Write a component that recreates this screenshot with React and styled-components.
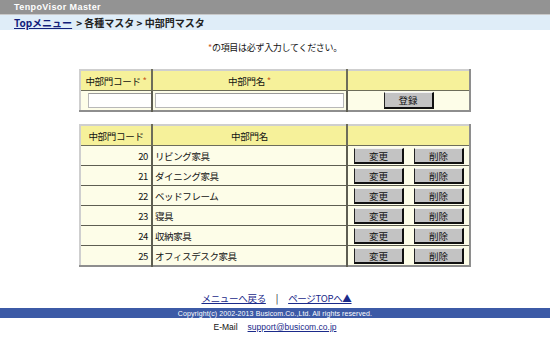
import React from "react";
import styled, { createGlobalStyle } from "styled-components";

const GlobalStyle = createGlobalStyle`
  html, body {
    margin: 0;
    padding: 0;
    background: #ffffff;
  }
  body {
    font-family: "Noto Sans CJK JP", "Liberation Sans", sans-serif;
    font-size: 10px;
    color: #111;
  }
`;

const Page = styled.div`
  width: 550px;
  height: 346px;
  overflow: hidden;
  display: flex;
  flex-direction: column;
`;

const TitleBar = styled.div`
  height: 14px;
  background: #939393;
  border-bottom: 1px solid #c9c9c9;
  display: flex;
  align-items: center;
  padding-left: 14px;
  color: #fff;
  font-family: "Liberation Sans", sans-serif;
  font-weight: bold;
  font-size: 9px;
  letter-spacing: 0.4px;
`;

const Crumbs = styled.div`
  height: 15px;
  background: #dfedf8;
  display: flex;
  align-items: center;
  gap: 4px;
  padding-left: 14px;
  font-size: 10px;
  font-weight: bold;
  color: #222;
`;

const CrumbLink = styled.a`
  color: #12207a;
  text-decoration: underline;
`;

const Note = styled.div`
  margin-top: 12px;
  text-align: center;
  font-size: 9px;
  line-height: 12px;
  letter-spacing: -0.3px;
`;

const Star = styled.span`
  color: #c85a1e;
`;

const Table = styled.table`
  margin: ${(p) => p.$top}px auto 0;
  width: 390px;
  border-collapse: collapse;
  border-top: 2px solid #cfcfcf;
  border-left: 2px solid #cfcfcf;
  border-right: 2px solid #8e8e8e;
  border-bottom: 2px solid #8e8e8e;
  table-layout: fixed;
`;

const Head = styled.th`
  height: 19px;
  padding: 0;
  background: #f6f19a;
  font-weight: normal;
  font-size: 9.5px;
  text-align: center;
  letter-spacing: -0.3px;
  border-left: ${(p) => (p.$first ? "none" : "2px solid #6d6d5a")};
  border-bottom: 1px solid #6d6d5a;
`;

const Cell = styled.td`
  height: 19px;
  padding: 0 ${(p) => (p.$right ? 3 : 2)}px 0 ${(p) => (p.$right ? 0 : 2)}px;
  background: #fdfde8;
  font-size: 9.5px;
  letter-spacing: -0.4px;
  text-align: ${(p) => p.$align || "left"};
  white-space: nowrap;
  border-left: ${(p) => (p.$first ? "none" : "2px solid #5e5e52")};
  border-top: 1px solid #5e5e52;
`;

const Input = styled.input`
  box-sizing: border-box;
  display: block;
  width: ${(p) => p.$w}px;
  height: 15px;
  margin-left: ${(p) => p.$ml || 0}px;
  border: 1px solid #b8b8b8;
  border-top-color: #9a9a9a;
  background: #fff;
  padding: 0;
`;

const Buttons = styled.div`
  display: flex;
  justify-content: ${(p) => (p.$center ? "center" : "flex-start")};
  gap: 10px;
  padding-left: ${(p) => (p.$center ? 0 : 4)}px;
`;

const Button = styled.button`
  box-sizing: border-box;
  width: 50px;
  height: ${(p) => p.$h || 16}px;
  padding: 0;
  background: #c3c3c3;
  font-family: "Noto Sans CJK JP", sans-serif;
  font-size: 9.5px;
  color: #111;
  border-top: 1px solid #f4f4f4;
  border-left: 1px solid #222;
  border-right: 2px solid #111;
  border-bottom: 2px solid #111;
`;

const FootLinks = styled.div`
  margin-top: 25px;
  display: flex;
  justify-content: center;
  gap: 10px;
  font-size: 9.5px;
  line-height: 12px;
  padding-left: 3px;
  letter-spacing: -0.3px;
`;

const FootLink = styled.a`
  color: #1b2a8a;
  text-decoration: underline;
`;

const Copyright = styled.div`
  margin-top: 4px;
  height: 10px;
  background: #3c5aa6;
  color: #fff;
  font-family: "Liberation Sans", sans-serif;
  font-size: 7px;
  display: flex;
  align-items: center;
  justify-content: center;
  letter-spacing: 0.1px;
`;

const Mail = styled.div`
  margin-top: 4px;
  display: flex;
  justify-content: center;
  gap: 10px;
  font-family: "Liberation Sans", sans-serif;
  font-size: 8.5px;
  line-height: 11px;
  padding-left: 0;
`;

const rows = [
  [20, "リビング家具"],
  [21, "ダイニング家具"],
  [22, "ベッドフレーム"],
  [23, "寝具"],
  [24, "収納家具"],
  [25, "オフィスデスク家具"],
];

export default function App() {
  return (
    <Page>
      <GlobalStyle />
      <TitleBar>TenpoVisor Master</TitleBar>
      <Crumbs>
        <CrumbLink>Topメニュー</CrumbLink>
        <span>&gt; 各種マスタ &gt; 中部門マスタ</span>
      </Crumbs>
      <Note>
        <Star>*</Star>の項目は必ず入力してください。
      </Note>

      <Table $top={15}>
        <colgroup>
          <col style={{ width: 72 }} />
          <col style={{ width: 195 }} />
          <col style={{ width: 123 }} />
        </colgroup>
        <thead>
          <tr>
            <Head $first>
              中部門コード <Star>*</Star>
            </Head>
            <Head>
              中部門名 <Star>*</Star>
            </Head>
            <Head />
          </tr>
        </thead>
        <tbody>
          <tr>
            <Cell $first>
              <Input $w={64} $ml={5} />
            </Cell>
            <Cell>
              <Input $w={189} />
            </Cell>
            <Cell>
              <Buttons $center>
                <Button $h={17}>登録</Button>
              </Buttons>
            </Cell>
          </tr>
        </tbody>
      </Table>

      <Table $top={12}>
        <colgroup>
          <col style={{ width: 72 }} />
          <col style={{ width: 195 }} />
          <col style={{ width: 123 }} />
        </colgroup>
        <thead>
          <tr>
            <Head $first>中部門コード</Head>
            <Head>中部門名</Head>
            <Head />
          </tr>
        </thead>
        <tbody>
          {rows.map(([code, name]) => (
            <tr key={code}>
              <Cell $first $align="right" $right>
                {code}
              </Cell>
              <Cell>{name}</Cell>
              <Cell>
                <Buttons>
                  <Button>変更</Button>
                  <Button>削除</Button>
                </Buttons>
              </Cell>
            </tr>
          ))}
        </tbody>
      </Table>

      <FootLinks>
        <FootLink>メニューへ戻る</FootLink>
        <span>|</span>
        <FootLink>ページTOPへ▲</FootLink>
      </FootLinks>
      <Copyright>Copyright(c) 2002-2013 Busicom.Co.,Ltd. All rights reserved.</Copyright>
      <Mail>
        <span>E-Mail</span>
        <FootLink>support@busicom.co.jp</FootLink>
      </Mail>
    </Page>
  );
}
